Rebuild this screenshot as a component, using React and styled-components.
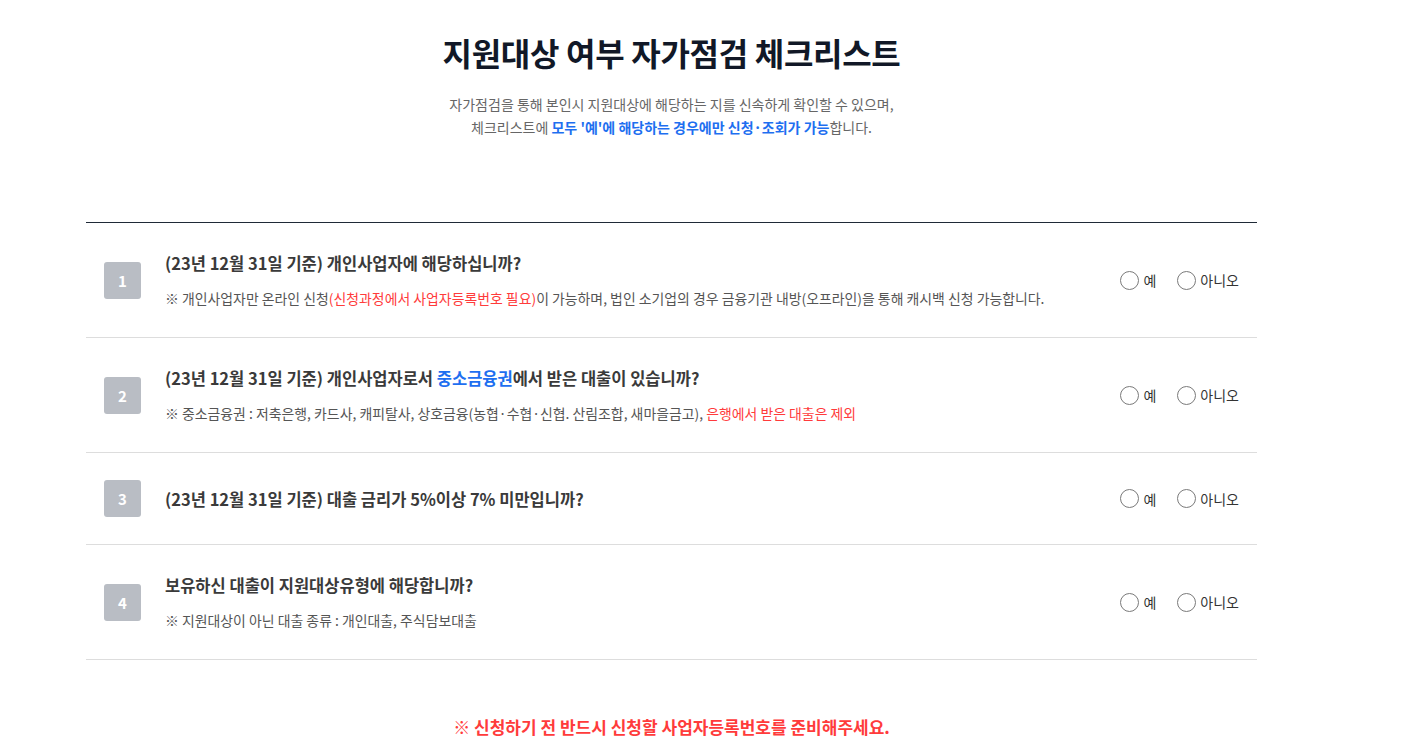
import React from "react";
import styled, { createGlobalStyle } from "styled-components";

const GlobalStyle = createGlobalStyle`
  html, body {
    margin: 0;
    padding: 0;
    background: #fff;
  }
  body {
    font-family: "Noto Sans CJK KR", "Noto Sans", sans-serif;
    color: #333;
  }
`;

const Page = styled.main`
  width: 1171px;
  margin-left: 86px;
  padding-top: 32px;
`;

const Title = styled.h1`
  margin: 0;
  text-align: center;
  font-size: 32px;
  line-height: 40px;
  font-weight: 700;
  letter-spacing: -0.3px;
  color: #111827;
`;

const Lead = styled.p`
  margin: 21px 0 0;
  text-align: center;
  font-size: 14px;
  line-height: 23px;
  color: #666;
`;

const Blue = styled.span`
  color: #1e6ff0;
  font-weight: ${(p) => (p.$bold ? 600 : "inherit")};
`;

const Red = styled.span`
  color: #ff3b3b;
`;

const List = styled.ul`
  list-style: none;
  margin: 83px 0 0;
  padding: 0;
  border-top: 1px solid #1f2a37;
`;

const Row = styled.li`
  display: flex;
  align-items: center;
  padding: 27px 18px;
  border-bottom: 1px solid #ddd;
`;

const Badge = styled.span`
  flex: none;
  width: 37px;
  height: 37px;
  border-radius: 3px;
  background: #b9bdc4;
  color: #fff;
  font-size: 15px;
  font-weight: 700;
  display: flex;
  align-items: center;
  justify-content: center;
`;

const Body = styled.div`
  flex: 1;
  margin-left: 24px;
`;

const Question = styled.p`
  margin: 0;
  font-size: 16.5px;
  line-height: 26px;
  font-weight: 600;
  color: #3a3a3a;
`;

const Note = styled.p`
  margin: 10px 0 0;
  font-size: 13.9px;
  line-height: 24px;
  color: #555;
`;

const Choices = styled.div`
  flex: none;
  display: flex;
  align-items: center;
  gap: 21px;
`;

const Choice = styled.label`
  display: flex;
  align-items: center;
  gap: 4px;
  font-size: 14px;
  color: #333;
  cursor: pointer;
`;

const Radio = styled.input.attrs({ type: "radio" })`
  appearance: none;
  margin: 0;
  width: 19px;
  height: 19px;
  border-radius: 50%;
  border: 1px solid #7a7a7a;
  background: #fff;
  &:checked {
    box-shadow: inset 0 0 0 4px #fff;
    background: #1e6ff0;
  }
`;

const Notice = styled.p`
  margin: 55px 0 0;
  text-align: center;
  font-size: 17px;
  line-height: 24px;
  font-weight: 700;
  color: #ff3b3b;
`;

const questions = [
  {
    q: "(23년 12월 31일 기준) 개인사업자에 해당하십니까?",
    note: (
      <>
        ※ 개인사업자만 온라인 신청<Red>(신청과정에서 사업자등록번호 필요)</Red>이
        가능하며, 법인 소기업의 경우 금융기관 내방(오프라인)을 통해 캐시백 신청
        가능합니다.
      </>
    ),
  },
  {
    q: (
      <>
        (23년 12월 31일 기준) 개인사업자로서 <Blue>중소금융권</Blue>에서 받은 대출이
        있습니까?
      </>
    ),
    note: (
      <>
        ※ 중소금융권 : 저축은행, 카드사, 캐피탈사, 상호금융(농협·수협·신협. 산림조합,
        새마을금고), <Red>은행에서 받은 대출은 제외</Red>
      </>
    ),
  },
  {
    q: "(23년 12월 31일 기준) 대출 금리가 5%이상 7% 미만입니까?",
  },
  {
    q: "보유하신 대출이 지원대상유형에 해당합니까?",
    note: "※ 지원대상이 아닌 대출 종류 : 개인대출, 주식담보대출",
  },
];

const App = () => {
  return (
    <>
      <GlobalStyle />
      <Page>
        <Title>지원대상 여부 자가점검 체크리스트</Title>
        <Lead>
          자가점검을 통해 본인시 지원대상에 해당하는 지를 신속하게 확인할 수 있으며,
          <br />
          체크리스트에 <Blue $bold>모두 '예'에 해당하는 경우에만 신청·조회가 가능</Blue>
          합니다.
        </Lead>
        <List>
          {questions.map((item, index) => (
            <Row key={index}>
              <Badge>{index + 1}</Badge>
              <Body>
                <Question>{item.q}</Question>
                {item.note && <Note>{item.note}</Note>}
              </Body>
              <Choices>
                <Choice>
                  <Radio name={`q${index}`} value="y" />예
                </Choice>
                <Choice>
                  <Radio name={`q${index}`} value="n" />아니오
                </Choice>
              </Choices>
            </Row>
          ))}
        </List>
        <Notice>※ 신청하기 전 반드시 신청할 사업자등록번호를 준비해주세요.</Notice>
      </Page>
    </>
  );
};

export default App;
